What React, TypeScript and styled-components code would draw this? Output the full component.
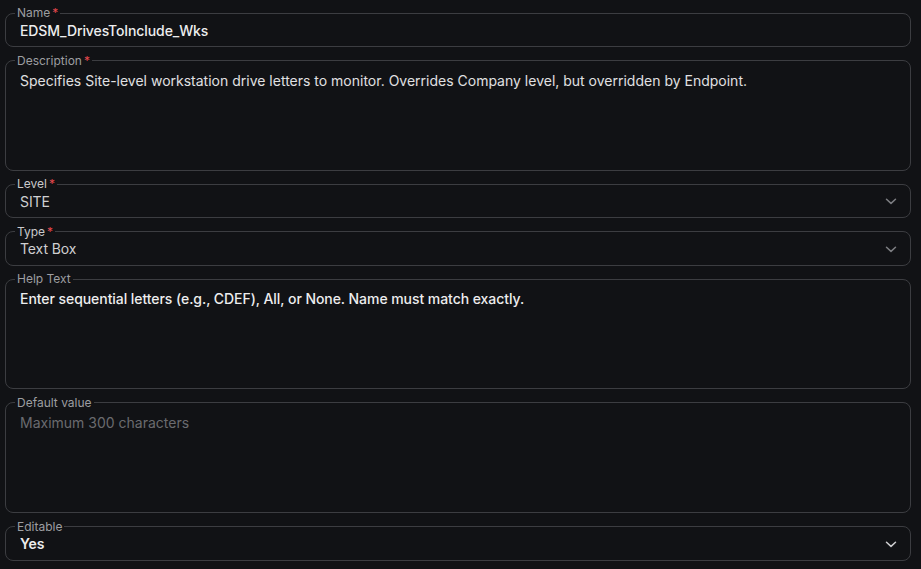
import React from 'react';
import styled, { createGlobalStyle } from 'styled-components';

const GlobalStyle = createGlobalStyle`
    html, body {
        margin: 0;
        padding: 0;
        background: #111215;
    }
    body {
        font-family: Inter, "Noto Sans", sans-serif;
        -webkit-font-smoothing: antialiased;
    }
`

type Tone = 'bright' | 'soft' | 'muted';

const Form = styled.form`
    display: flex;
    flex-direction: column;
    gap: 6.6px;
    width: 906px;
    padding: 6px 10px 10px 5px;
`

const Field = styled.fieldset`
    margin: 0;
    padding: 0 9px;
    min-width: 0;
    border: 1px solid #3c3d41;
    border-radius: 8px;
`

const Legend = styled.legend<{ $strong?: boolean }>`
    padding: 0 2px;
    font-size: 12px;
    line-height: 14px;
    color: ${p => (p.$strong ? '#c9c9cb' : '#9d9ea1')};
`

const Required = styled.span`
    color: #e5484d;
    margin-left: 2px;
`

const Row = styled.div`
    display: flex;
    align-items: flex-start;
`

const valueColor = (t: Tone) => (t === 'bright' ? '#ededee' : t === 'soft' ? '#cfcfd1' : '#e0e0e2');

const Input = styled.input<{ $tone: Tone; $weight: number }>`
    flex: 1;
    min-width: 0;
    height: 26px;
    box-sizing: border-box;
    padding: 0 0 6px 5px;
    margin: 0;
    border: none;
    outline: none;
    background: transparent;
    font-family: inherit;
    font-size: 14px;
    line-height: 20px;
    letter-spacing: -0.1px;
    font-weight: ${p => p.$weight};
    color: ${p => valueColor(p.$tone)};
`

const Area = styled.textarea<{ $tone: Tone; $weight: number }>`
    display: block;
    width: 100%;
    height: 102px;
    box-sizing: border-box;
    padding: 3px 0 0 5px;
    margin: 0;
    border: none;
    outline: none;
    resize: none;
    background: transparent;
    font-family: inherit;
    font-size: 14px;
    line-height: 20px;
    font-weight: ${p => p.$weight};
    letter-spacing: ${p => (p.$weight > 400 ? '-0.06px' : '0')};
    color: ${p => valueColor(p.$tone)};

    &::placeholder {
        color: #6a6b6f;
        font-weight: 400;
    }
`

const Chevron = styled.svg<{ $bright?: boolean }>`
    flex: none;
    width: 12px;
    height: 20px;
    margin-right: 4px;
    color: ${p => (p.$bright ? '#cdcdcf' : '#7d7e82')};
`

const ChevronIcon = ({ bright }: { bright?: boolean }) => (
    <Chevron $bright={bright} viewBox="0 0 12 20" fill="none">
        <polyline points="1.5,8.2 6,12.4 10.5,8.2" stroke="currentColor" strokeWidth="1.5" strokeLinecap="round" strokeLinejoin="round" />
    </Chevron>
)

const App = () => {
    return (
        <>
            <GlobalStyle />
            <Form onSubmit={e => e.preventDefault()}>
                <Field>
                    <Legend>Name<Required>*</Required></Legend>
                    <Row>
                        <Input $tone="bright" $weight={500} readOnly defaultValue="EDSM_DrivesToInclude_Wks" />
                    </Row>
                </Field>

                <Field>
                    <Legend>Description<Required>*</Required></Legend>
                    <Area
                        $tone="muted"
                        $weight={400}
                        readOnly
                        defaultValue="Specifies Site-level workstation drive letters to monitor. Overrides Company level, but overridden by Endpoint."
                    />
                </Field>

                <Field>
                    <Legend $strong>Level<Required>*</Required></Legend>
                    <Row>
                        <Input $tone="soft" $weight={400} readOnly defaultValue="SITE" />
                        <ChevronIcon />
                    </Row>
                </Field>

                <Field>
                    <Legend $strong>Type<Required>*</Required></Legend>
                    <Row>
                        <Input $tone="soft" $weight={400} readOnly defaultValue="Text Box" />
                        <ChevronIcon />
                    </Row>
                </Field>

                <Field>
                    <Legend>Help Text</Legend>
                    <Area
                        $tone="bright"
                        $weight={500}
                        readOnly
                        defaultValue="Enter sequential letters (e.g., CDEF), All, or None. Name must match exactly."
                    />
                </Field>

                <Field>
                    <Legend>Default value</Legend>
                    <Area $tone="muted" $weight={400} placeholder="Maximum 300 characters" />
                </Field>

                <Field>
                    <Legend>Editable</Legend>
                    <Row>
                        <Input $tone="bright" $weight={600} readOnly defaultValue="Yes" />
                        <ChevronIcon bright />
                    </Row>
                </Field>
            </Form>
        </>
    )
}

export default App;
